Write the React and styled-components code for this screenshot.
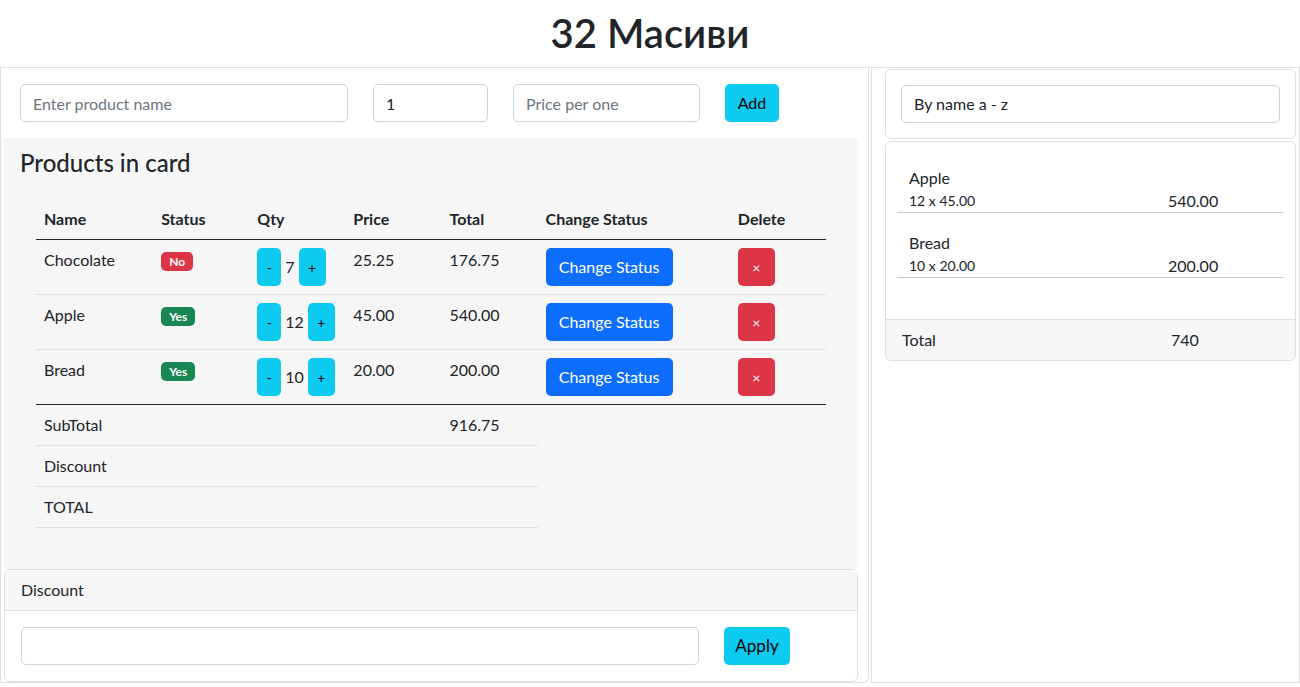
import React from 'react';
import styled, {createGlobalStyle} from 'styled-components';

const GlobalStyle = createGlobalStyle`
  * { box-sizing: border-box; }
  body {
    margin: 0;
    font-family: Lato, "Liberation Sans", sans-serif;
    font-size: 16px;
    line-height: 1.5;
    color: #212529;
    background: #fff;
  }
`;

const Title = styled.h1`
  margin: 0;
  padding: 9px 0 10px;
  text-align: center;
  font-size: 40px;
  font-weight: 600;
  line-height: 48px;
  border-bottom: 1px solid #dee2e6;
`;

const Main = styled.div`
  display: grid;
  grid-template-columns: 869px 1fr;
  column-gap: 2px;
  height: 615px;
`;

const LeftCard = styled.div`
  display: flex;
  flex-direction: column;
  border: 1px solid #dfdfdf;
  border-top: none;
  border-bottom-right-radius: 6px;
`;

const InputRow = styled.div`
  display: flex;
  gap: 25px;
  padding: 16px 19px;
`;

const Input = styled.input`
  width: ${p => p.$w}px;
  height: 38px;
  padding: 6px 12px;
  font: inherit;
  color: #212529;
  background: #fff;
  border: 1px solid #ced4da;
  border-radius: 5px;
  outline: none;
  &::placeholder { color: #6c757d; }
`;

const Btn = styled.button`
  flex: none;
  width: ${p => (p.$w ? `${p.$w}px` : 'auto')};
  height: 38px;
  padding: 6px ${p => (p.$w ? 0 : 12)}px;
  font-family: inherit;
  font-size: ${p => p.$fs || 16}px;
  line-height: 1.5;
  text-align: center;
  border: none;
  border-radius: 5px;
  cursor: pointer;
  color: ${p => (p.$variant === 'info' ? '#000' : '#fff')};
  background: ${p =>
    p.$variant === 'primary' ? '#0d6efd' : p.$variant === 'danger' ? '#dc3545' : '#0dcaf0'};
`;

const Panel = styled.div`
  flex: 1;
  margin: 0 10px 0 3px;
  padding: 8px 16px 40px;
  background: #f6f6f6;
`;

const Heading = styled.h3`
  margin: 2px 0 22px;
  font-size: 24px;
  font-weight: 500;
  line-height: 29px;
`;

const Table = styled.table`
  width: 790px;
  margin: 0 16px;
  border-collapse: collapse;
  table-layout: fixed;
`;

const Th = styled.th`
  padding: 8px;
  text-align: left;
  font-weight: 700;
  border-bottom: 1px solid #212529;
`;

const Td = styled.td`
  padding: 8px;
  vertical-align: top;
  border-bottom: 1px solid #dee2e6;
`;

const BodyRow = styled.tr`
  &:last-child td { border-bottom-color: #212529; }
`;

const Badge = styled.span`
  display: inline-block;
  margin-top: 3px;
  padding: 3px 8px;
  font-size: 12px;
  font-weight: 700;
  line-height: 1.1;
  color: #fff;
  border-radius: 5px;
  background: ${p => (p.$ok ? '#198754' : '#dc3545')};
`;

const Qty = styled.div`
  display: flex;
  align-items: center;
  gap: 4px;
  white-space: nowrap;
`;

const DiscountCard = styled.div`
  margin: 0 10px 0 3px;
  border: 1px solid #dfdfdf;
  border-radius: 6px;
`;

const CardHeader = styled.div`
  padding: 8px 16px;
  background: #f7f7f7;
  border-bottom: 1px solid #dfdfdf;
`;

const DiscountBody = styled.div`
  display: flex;
  gap: 25px;
  padding: 16px;
`;

const RightCard = styled.div`
  padding: 1px 3px 0 13px;
  border: 1px solid #dfdfdf;
  border-top: none;
`;

const SortCard = styled.div`
  padding: 15px;
  border: 1px solid #dfdfdf;
  border-radius: 6px;
`;

const Select = styled.select`
  width: 100%;
  height: 38px;
  padding: 6px 12px;
  font: inherit;
  color: #212529;
  background: #fff;
  border: 1px solid #ced4da;
  border-radius: 5px;
  appearance: none;
  outline: none;
`;

const ListCard = styled.div`
  margin-top: 2px;
  border: 1px solid #dfdfdf;
  border-radius: 6px;
  overflow: hidden;
`;

const List = styled.div`
  padding: 6px 11px 41px;
`;

const Item = styled.div`
  padding: 18px 12px 1px;
  border-bottom: 1px solid #c8c8c8;
`;

const ItemRow = styled.div`
  display: grid;
  grid-template-columns: 259px 1fr;
  align-items: end;
  line-height: 21px;
`;

const Small = styled.span`
  font-size: 14px;
`;

const Footer = styled.div`
  display: grid;
  grid-template-columns: 269px 1fr;
  padding: 8px 16px;
  background: #f7f7f7;
  border-top: 1px solid #dfdfdf;
`;

const products = [
  {name: 'Chocolate', ok: false, qty: 7, price: '25.25', total: '176.75'},
  {name: 'Apple', ok: true, qty: 12, price: '45.00', total: '540.00'},
  {name: 'Bread', ok: true, qty: 10, price: '20.00', total: '200.00'},
];

const cart = [
  {name: 'Apple', qty: 12, price: '45.00', total: '540.00'},
  {name: 'Bread', qty: 10, price: '20.00', total: '200.00'},
];

const cols = [117, 96, 96, 96, 96, 192, 96];

export default function App() {
  return (
    <>
      <GlobalStyle />
      <Title>32 Масиви</Title>
      <Main>
        <LeftCard>
          <InputRow>
            <Input $w={328} placeholder="Enter product name" />
            <Input $w={115} defaultValue="1" />
            <Input $w={187} placeholder="Price per one" />
            <Btn $variant="info" $w={54}>Add</Btn>
          </InputRow>
          <Panel>
            <Heading>Products in card</Heading>
            <Table>
              <colgroup>
                {cols.map((w, i) => <col key={i} style={{width: w}} />)}
              </colgroup>
              <thead>
                <tr>
                  <Th>Name</Th>
                  <Th>Status</Th>
                  <Th>Qty</Th>
                  <Th>Price</Th>
                  <Th>Total</Th>
                  <Th>Change Status</Th>
                  <Th>Delete</Th>
                </tr>
              </thead>
              <tbody>
                {products.map(p => (
                  <BodyRow key={p.name}>
                    <Td>{p.name}</Td>
                    <Td><Badge $ok={p.ok}>{p.ok ? 'Yes' : 'No'}</Badge></Td>
                    <Td>
                      <Qty>
                        <Btn $variant="info" $w={24} $fs={14}>-</Btn>
                        {p.qty}
                        <Btn $variant="info" $w={27} $fs={14}>+</Btn>
                      </Qty>
                    </Td>
                    <Td>{p.price}</Td>
                    <Td>{p.total}</Td>
                    <Td><Btn $variant="primary" $w={127}>Change Status</Btn></Td>
                    <Td><Btn $variant="danger" $w={37} $fs={14}>×</Btn></Td>
                  </BodyRow>
                ))}
              </tbody>
              <tfoot>
                <tr>
                  <Td>SubTotal</Td><Td /><Td /><Td /><Td>916.75</Td>
                </tr>
                <tr>
                  <Td>Discount</Td><Td /><Td /><Td /><Td />
                </tr>
                <tr>
                  <Td>TOTAL</Td><Td /><Td /><Td /><Td />
                </tr>
              </tfoot>
            </Table>
          </Panel>
          <DiscountCard>
            <CardHeader>Discount</CardHeader>
            <DiscountBody>
              <Input $w={678} />
              <Btn $variant="info" $w={66} $fs={17}>Apply</Btn>
            </DiscountBody>
          </DiscountCard>
        </LeftCard>
        <RightCard>
          <SortCard>
            <Select defaultValue="az">
              <option value="az">By name a - z</option>
              <option value="za">By name z - a</option>
            </Select>
          </SortCard>
          <ListCard>
            <List>
              {cart.map(c => (
                <Item key={c.name}>
                  <div>{c.name}</div>
                  <ItemRow>
                    <Small>{c.qty} x {c.price}</Small>
                    <span>{c.total}</span>
                  </ItemRow>
                </Item>
              ))}
            </List>
            <Footer>
              <span>Total</span>
              <span>740</span>
            </Footer>
          </ListCard>
        </RightCard>
      </Main>
    </>
  );
}
